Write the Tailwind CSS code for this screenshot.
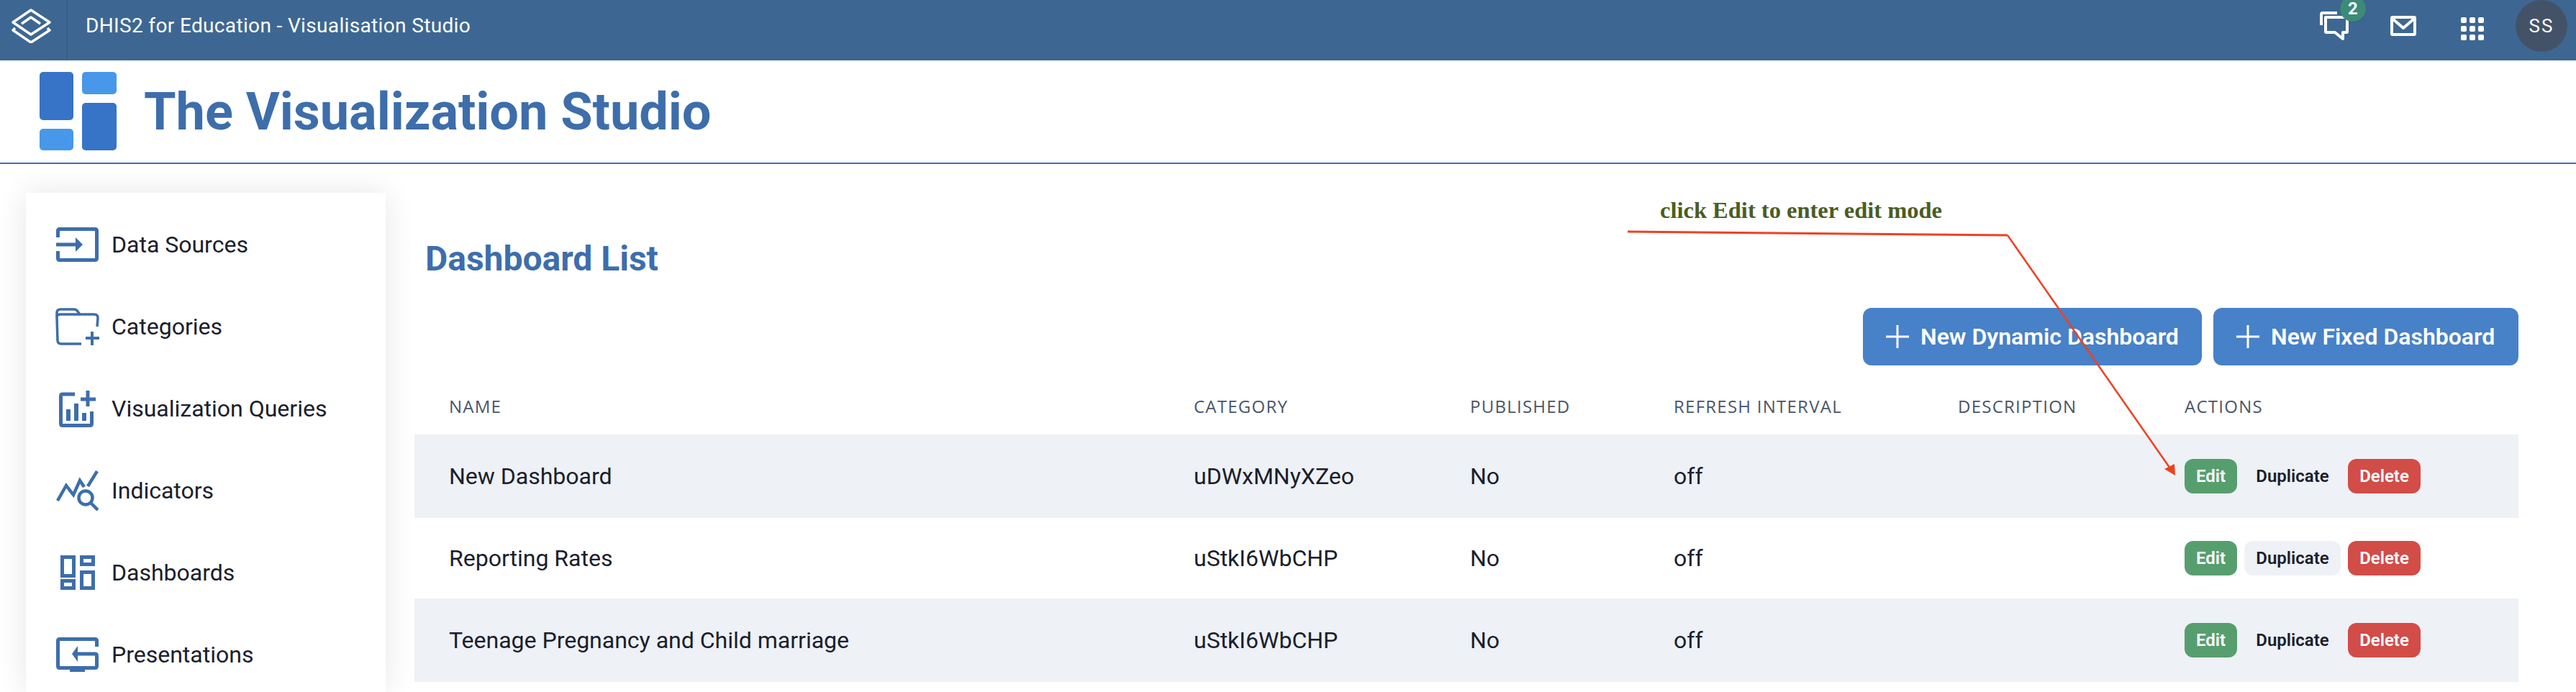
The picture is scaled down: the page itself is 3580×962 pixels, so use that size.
<!doctype html>
<html>
<head>
<meta charset="utf-8">
<title>The Visualization Studio</title>
<script src="https://cdn.jsdelivr.net/npm/@tailwindcss/browser@4"></script>
</head>
<body class="relative w-[3580px] h-[962px] overflow-hidden bg-white font-['Roboto',sans-serif] text-[#1a202c]">

  <!-- DHIS2 top bar -->
  <header class="flex h-[84px] items-start bg-[#3d6792] text-white">
    <div class="h-full w-[94px] border-r-2 border-[#376087] pt-[12px] pl-[16px]">
      <svg class="w-[56px] h-[48px]" viewBox="0 0 56 48" fill="none" stroke="#fff" stroke-width="3.500" stroke-linejoin="round">
        <path d="M27 2 L53 19 L27 36 L2 19 Z"/>
        <path d="M14 21 L27 12 L40 21"/>
        <path d="M5 27 L2 30 L27 47 L53 30 L50 27"/>
      </svg>
    </div>
    <div class="ml-[25px] mt-[15px] text-[28px] leading-[42px] tracking-[0.35px]">DHIS2 for Education - Visualisation Studio</div>
    <div class="ml-auto flex h-full items-start">
      <div class="relative mt-[16px] mr-[58px] w-[40px] h-[40px]">
        <svg class="w-[40px] h-[40px]" viewBox="0 0 40 40" fill="none" stroke="#fff" stroke-width="4" stroke-linejoin="round">
          <path d="M2 19 V4 Q2 2 4 2 H24"/>
          <path d="M8 8 H38 V28 Q38 29 37 29 H32 V38 L21 29 H9 Q8 29 8 28 Z"/>
        </svg>
        <span class="absolute left-[28px] top-[-22px] flex w-[36px] h-[36px] items-center justify-center rounded-full bg-[#3c8a78] text-[24px] font-bold shadow">2</span>
      </div>
      <svg class="mt-[22px] mr-[62px] w-[36px] h-[28px]" viewBox="0 0 36 28" fill="none" stroke="#fff" stroke-width="4" stroke-linejoin="round">
        <rect x="2" y="2" width="32" height="24" rx="1"/>
        <path d="M3 4 L18 17 L33 4"/>
      </svg>
      <div class="mt-[24px] mr-[44px] grid w-[32px] grid-cols-3 gap-[4px]">
        <i class="size-[8px] rounded-[2px] bg-white"></i><i class="size-[8px] rounded-[2px] bg-white"></i><i class="size-[8px] rounded-[2px] bg-white"></i>
        <i class="size-[8px] rounded-[2px] bg-white"></i><i class="size-[8px] rounded-[2px] bg-white"></i><i class="size-[8px] rounded-[2px] bg-white"></i>
        <i class="size-[8px] rounded-[2px] bg-white"></i><i class="size-[8px] rounded-[2px] bg-white"></i><i class="size-[8px] rounded-[2px] bg-white"></i>
      </div>
      <div class="mr-[12px] flex size-[72px] items-center justify-center rounded-full bg-[#445268] text-[26px] tracking-[2px]">SS</div>
    </div>
  </header>

  <!-- Studio title -->
  <div class="flex h-[144px] items-start border-b-2 border-[#3d6eab] pl-[55px]">
    <div class="mt-[16px] flex gap-[12px]">
      <div class="flex w-[47px] flex-col gap-[12px]">
        <div class="h-[67px] rounded-[5px] bg-[#3774c8]"></div>
        <div class="h-[30px] rounded-[5px] bg-[#4798ea]"></div>
      </div>
      <div class="flex w-[48px] flex-col gap-[12px]">
        <div class="h-[31px] rounded-[5px] bg-[#4798ea]"></div>
        <div class="h-[66px] rounded-[5px] bg-[#3774c8]"></div>
      </div>
    </div>
    <h1 class="ml-[38px] mt-[24px] text-[72px] leading-[96px] font-bold text-[#3d6eab]">The Visualization Studio</h1>
  </div>

  <main class="flex items-start">
    <!-- Sidebar -->
    <nav class="ml-[36px] mt-[40px] h-[694px] w-[500px] shrink-0 bg-white pt-[15px] text-[32px] shadow-[0_0_40px_rgba(0,0,0,0.1)]">
      <a class="flex h-[114px] items-center">
        <span class="ml-[42px] flex w-[59px] justify-center">
          <svg class="w-[59px] h-[48px]" viewBox="0 0 59 48" fill="none" stroke="#3d6eab" stroke-width="5">
            <path d="M2.500 14 V5 Q2.500 2.500 5 2.500 H54 Q56.500 2.500 56.500 5 V43 Q56.500 45.500 54 45.500 H5 Q2.500 45.500 2.500 43 V33"/>
            <path d="M0 24 H30" />
            <path d="M27 14 L37 24 L27 34 Z" fill="#3d6eab" stroke="none"/>
          </svg>
        </span>
        <span class="ml-[18px]">Data Sources</span>
      </a>
      <a class="flex h-[114px] items-center">
        <span class="ml-[42px] flex w-[59px] justify-center">
          <svg class="w-[62px] h-[52px] shrink-0" viewBox="0 0 62 52" fill="none" stroke="#3d6eab" stroke-width="3.500">
            <path d="M36 50 H8 Q3 50 3 45 L2 13 V7 Q2 2 7 2 H26 Q29 2 31 5 L34 9 H54 Q59 9 59 14 L58 26"/>
            <path d="M2 13 Q2 9 7 9 H34"/>
            <path d="M42 42 H61 M51 33 V52" stroke-width="4"/>
          </svg>
        </span>
        <span class="ml-[18px]">Categories</span>
      </a>
      <a class="flex h-[114px] items-center">
        <span class="ml-[42px] flex w-[59px] justify-center">
          <svg class="w-[52px] h-[52px] shrink-0" viewBox="0 0 52 52" fill="none" stroke="#3d6eab" stroke-width="5">
            <path d="M22 6 H5 Q2.500 6 2.500 8.500 V47 Q2.500 49.500 5 49.500 H43 Q45.500 49.500 45.500 47 V30"/>
            <path d="M30 13 H51 M40 1 V23" />
            <path d="M13 43 V27 M24 43 V19 M35 43 V32" stroke-width="6"/>
          </svg>
        </span>
        <span class="ml-[18px]">Visualization Queries</span>
      </a>
      <a class="flex h-[114px] items-center">
        <span class="ml-[42px] flex w-[59px] justify-center">
          <svg class="w-[59px] h-[56px] shrink-0" viewBox="0 0 59 56" fill="none" stroke="#3d6eab" stroke-width="4.500">
            <path d="M2 42 L14 21 L24 34 L33 14 L39 23"/>
            <path d="M44 22 L57 1" />
            <circle cx="41" cy="38" r="9.500"/>
            <path d="M48 45 L58 55"/>
          </svg>
        </span>
        <span class="ml-[18px]">Indicators</span>
      </a>
      <a class="flex h-[114px] items-center">
        <span class="ml-[42px] flex w-[59px] justify-center">
          <svg class="w-[48px] h-[48px] shrink-0" viewBox="0 0 48 48" fill="none" stroke="#3d6eab" stroke-width="5">
            <rect x="2.500" y="2.500" width="16" height="26"/>
            <rect x="29.500" y="2.500" width="16" height="10"/>
            <rect x="2.500" y="35.500" width="16" height="10"/>
            <rect x="29.500" y="23.500" width="16" height="22"/>
          </svg>
        </span>
        <span class="ml-[18px]">Dashboards</span>
      </a>
      <a class="flex h-[114px] items-center">
        <span class="ml-[42px] flex w-[59px] justify-center">
          <svg class="w-[59px] h-[48px]" viewBox="0 0 59 48" fill="none" stroke="#3d6eab" stroke-width="5">
            <path d="M56.500 13 V5 Q56.500 2.500 54 2.500 H5 Q2.500 2.500 2.500 5 V40 Q2.500 42.500 5 42.500 H54 Q56.500 42.500 56.500 40 V25 Q56.500 23 54 23 H26"/>
            <path d="M30 12 L22 23 L30 34 Z" fill="#3d6eab" stroke="none"/>
            <path d="M19 43 H40 V48 H19 Z" fill="#3d6eab" stroke="none"/>
          </svg>
        </span>
        <span class="ml-[18px]">Presentations</span>
      </a>
    </nav>

    <!-- Dashboard list -->
    <section class="ml-[40px] w-[2924px]">
      <h2 class="mt-[96px] pl-[15px] text-[48px] leading-[72px] font-bold text-[#3d6eab]">Dashboard List</h2>
      <div class="mt-[32px] flex justify-end gap-[16px]">
        <button class="flex h-[80px] w-[471px] items-center rounded-[12px] bg-[#4781c8] pl-[32px] text-[32px] font-semibold text-white">
          <svg class="mr-[16px] size-[32px]" viewBox="0 0 32 32" stroke="#fff" stroke-width="3"><path d="M0 16 H32 M16 0 V32"/></svg>New Dynamic Dashboard
        </button>
        <button class="flex h-[80px] w-[424px] items-center rounded-[12px] bg-[#4781c8] pl-[32px] text-[32px] font-semibold text-white">
          <svg class="mr-[16px] size-[32px]" viewBox="0 0 32 32" stroke="#fff" stroke-width="3"><path d="M0 16 H32 M16 0 V32"/></svg>New Fixed Dashboard
        </button>
      </div>

      <div class="mt-[38px] grid h-[58px] grid-cols-[1035px_384px_283px_395px_315px_1fr] pl-[48px] font-['Open_Sans',sans-serif] text-[24px] leading-[38px] uppercase tracking-[1.250px] text-[#4a5568]">
        <div>Name</div><div>Category</div><div>Published</div><div>Refresh Interval</div><div>Description</div><div>Actions</div>
      </div>

      <div class="grid h-[116px] grid-cols-[1035px_384px_283px_395px_315px_1fr] items-center bg-[#eef1f6] pl-[48px] text-[32px]">
        <div>New Dashboard</div><div>uDWxMNyXZeo</div><div>No</div><div>off</div><div></div>
        <div class="flex gap-[10px] text-[24px] font-semibold">
          <button class="h-[48px] w-[73px] rounded-[12px] bg-[#579e6f] text-white">Edit</button>
          <button class="h-[48px] w-[134px] rounded-[12px]">Duplicate</button>
          <button class="h-[48px] w-[101px] rounded-[12px] bg-[#d24c48] text-white">Delete</button>
        </div>
      </div>
      <div class="grid h-[112px] grid-cols-[1035px_384px_283px_395px_315px_1fr] items-center pl-[48px] text-[32px]">
        <div>Reporting Rates</div><div>uStkI6WbCHP</div><div>No</div><div>off</div><div></div>
        <div class="flex gap-[10px] text-[24px] font-semibold">
          <button class="h-[48px] w-[73px] rounded-[12px] bg-[#579e6f] text-white">Edit</button>
          <button class="h-[48px] w-[134px] rounded-[12px] bg-[#eef1f6]">Duplicate</button>
          <button class="h-[48px] w-[101px] rounded-[12px] bg-[#d24c48] text-white">Delete</button>
        </div>
      </div>
      <div class="grid h-[116px] grid-cols-[1035px_384px_283px_395px_315px_1fr] items-center bg-[#eef1f6] pl-[48px] text-[32px]">
        <div>Teenage Pregnancy and Child marriage</div><div>uStkI6WbCHP</div><div>No</div><div>off</div><div></div>
        <div class="flex gap-[10px] text-[24px] font-semibold">
          <button class="h-[48px] w-[73px] rounded-[12px] bg-[#579e6f] text-white">Edit</button>
          <button class="h-[48px] w-[134px] rounded-[12px]">Duplicate</button>
          <button class="h-[48px] w-[101px] rounded-[12px] bg-[#d24c48] text-white">Delete</button>
        </div>
      </div>
    </section>
  </main>

  <!-- Annotation drawn over the page -->
  <div class="absolute left-[2307px] top-[274px] font-['Liberation_Serif',serif] text-[32.500px] leading-[36px] font-bold whitespace-nowrap text-[#4a5d23]">click Edit to enter edit mode</div>
  <svg class="absolute left-0 top-0 pointer-events-none" width="3580" height="962" fill="none">
    <path d="M2262 322 L2790 327 " stroke="#ee4122" stroke-width="3"/>
    <path d="M2790 327 L3018 654" stroke="#ee4122" stroke-width="2.500"/>
    <path d="M3023 661 L3008 652 L3022 645 Z" fill="#ee4122"/>
  </svg>
</body>
</html>
